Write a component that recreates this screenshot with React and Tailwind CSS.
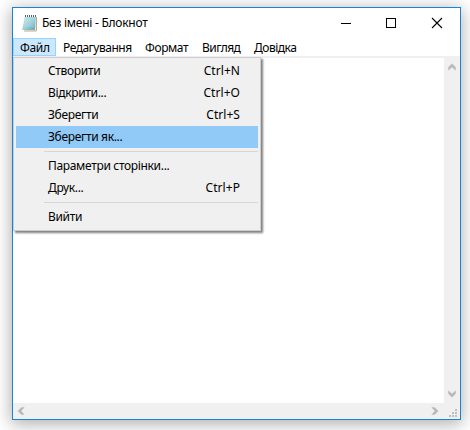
import React from "react";

const menus = [
  { label: "Файл", cls: "w-[43px] pl-[6px] border border-[#99d1ff] bg-[#cce8ff] pt-px tracking-[-0.35px]" },
  { label: "Редагування", cls: "w-[82px] pl-[7px] pt-[2px] tracking-[-0.5px]" },
  { label: "Формат", cls: "w-[57px] pl-[7px] pt-[2px] tracking-[-0.4px]" },
  { label: "Вигляд", cls: "w-[52px] pl-[7px] pt-[2px] tracking-[-0.5px]" },
  { label: "Довідка", cls: "w-[57px] pl-[7px] pt-[2px] tracking-[-0.5px]" },
];

function Item({ label, shortcut, active }) {
  return (
    <div className={`flex h-[22px] items-center justify-between pl-8 pr-[18px] leading-[22px] ${active ? "bg-[#91c9f7]" : ""}`}>
      <span className="tracking-[-0.33px]">{label}</span>
      <span className="tracking-[0.05px]">{shortcut}</span>
    </div>
  );
}

function Separator() {
  return <div className="mt-[3px] mb-[3px] ml-7 h-px bg-[#d7d7d7]" />;
}

function Chevron({ className }) {
  return (
    <svg className={className} width="8" height="8" viewBox="0 0 8 8" fill="#b8b8b8">
      <path d="M4 .8 7.5 4.3V7.2L4 4 .5 7.2V4.3z" stroke="#b8b8b8" strokeWidth=".4" />
    </svg>
  );
}

function NotepadIcon() {
  return (
    <svg width="16" height="17" viewBox="0 0 16 17">
      <defs>
        <linearGradient id="pad" x1="0" y1="0" x2="1" y2="1">
          <stop offset="0" stopColor="#cbe9ee" />
          <stop offset=".5" stopColor="#9dd0da" />
          <stop offset="1" stopColor="#5fa6b5" />
        </linearGradient>
      </defs>
      <path d="M3 2h12v13.5l-1 1H2z" fill="#b9ad86" />
      <path d="M3 2h11v13.5H2z" fill="#f3f0e2" />
      <path d="M2.7 2h11.1l-.8 13H.2z" fill="url(#pad)" />
      <path d="M2.5 5h10.5M2.2 7h10.5M1.8 9h10.7M1.5 11h10.8" stroke="#d9eff3" strokeWidth=".5" opacity=".6" />
      <path d="M3.5 0v2M5.5 0v2M7.5 0v2M9.5 0v2M11.5 0v2M13.5 0v2" stroke="#52656a" />
    </svg>
  );
}

export default function App() {
  return (
    <div className="h-[430px] w-[470px] overflow-hidden bg-white pl-3 pt-[7px] font-['Noto_Sans','Open_Sans',sans-serif] text-[12px] text-black">
      <div className="relative flex h-[413px] w-[449px] flex-col border border-[#1883d7] bg-white shadow-[0_3px_16px_1px_rgba(0,0,0,0.32)]">
        <div className="flex h-[30px] shrink-0 items-center justify-between pl-[9px]">
          <div className="flex items-center">
            <NotepadIcon />
            <span className="ml-[4px] whitespace-nowrap leading-[16px] tracking-[-0.25px]">Без імені - Блокнот</span>
          </div>
          <svg className="mr-[17px] shrink-0" width="102" height="12" viewBox="0 0 102 12" fill="none" stroke="#000">
            <path d="M0 6.5h10M45.5 1.5h9v9h-9z" shapeRendering="crispEdges" />
            <path d="m91 1 10 10M101 1 91 11" strokeWidth="1.1" />
          </svg>
        </div>
        <div className="flex h-[18px] shrink-0">
          {menus.map((m) => (
            <div key={m.label} className={`flex items-center whitespace-nowrap leading-[16px] ${m.cls}`}>{m.label}</div>
          ))}
        </div>
        <div className="h-[2px] shrink-0 bg-[#f0f0f0]" />
        <div className="flex min-h-0 flex-1">
          <div className="flex-1 bg-white" />
          <div className="flex w-4 flex-col items-center justify-between bg-[#f0f0f0] pb-[5px] pt-[5px]">
            <Chevron />
            <Chevron className="rotate-180" />
          </div>
        </div>
        <div className="flex h-4 shrink-0 items-center justify-between bg-[#f0f0f0] pl-[4px] pr-[2px]">
          <Chevron className="-rotate-90" />
          <div className="flex items-center">
            <Chevron className="rotate-90" />
            <svg className="ml-[10px] mt-[4px]" width="9" height="8" viewBox="0 0 9 8" fill="#bfbfbf" shapeRendering="crispEdges">
              <path d="M6 0h2v2H6zM3 3h2v2H3zM6 3h2v2H6zM0 6h2v2H0zM3 6h2v2H3zM6 6h2v2H6z" />
            </svg>
          </div>
        </div>
        <div className="absolute left-0 top-[49px] h-[174px] w-[248px] border border-[#cccccc] bg-[#f0f0f0] p-[2px] shadow-[2px_2px_2px_rgba(0,0,0,0.5)]">
          <Item label="Створити" shortcut="Ctrl+N" />
          <Item label="Відкрити..." shortcut="Ctrl+O" />
          <Item label="Зберегти" shortcut="Ctrl+S" />
          <Item label="Зберегти як..." active />
          <Separator />
          <Item label="Параметри сторінки..." />
          <Item label="Друк..." shortcut="Ctrl+P" />
          <Separator />
          <Item label="Вийти" />
        </div>
      </div>
    </div>
  );
}
